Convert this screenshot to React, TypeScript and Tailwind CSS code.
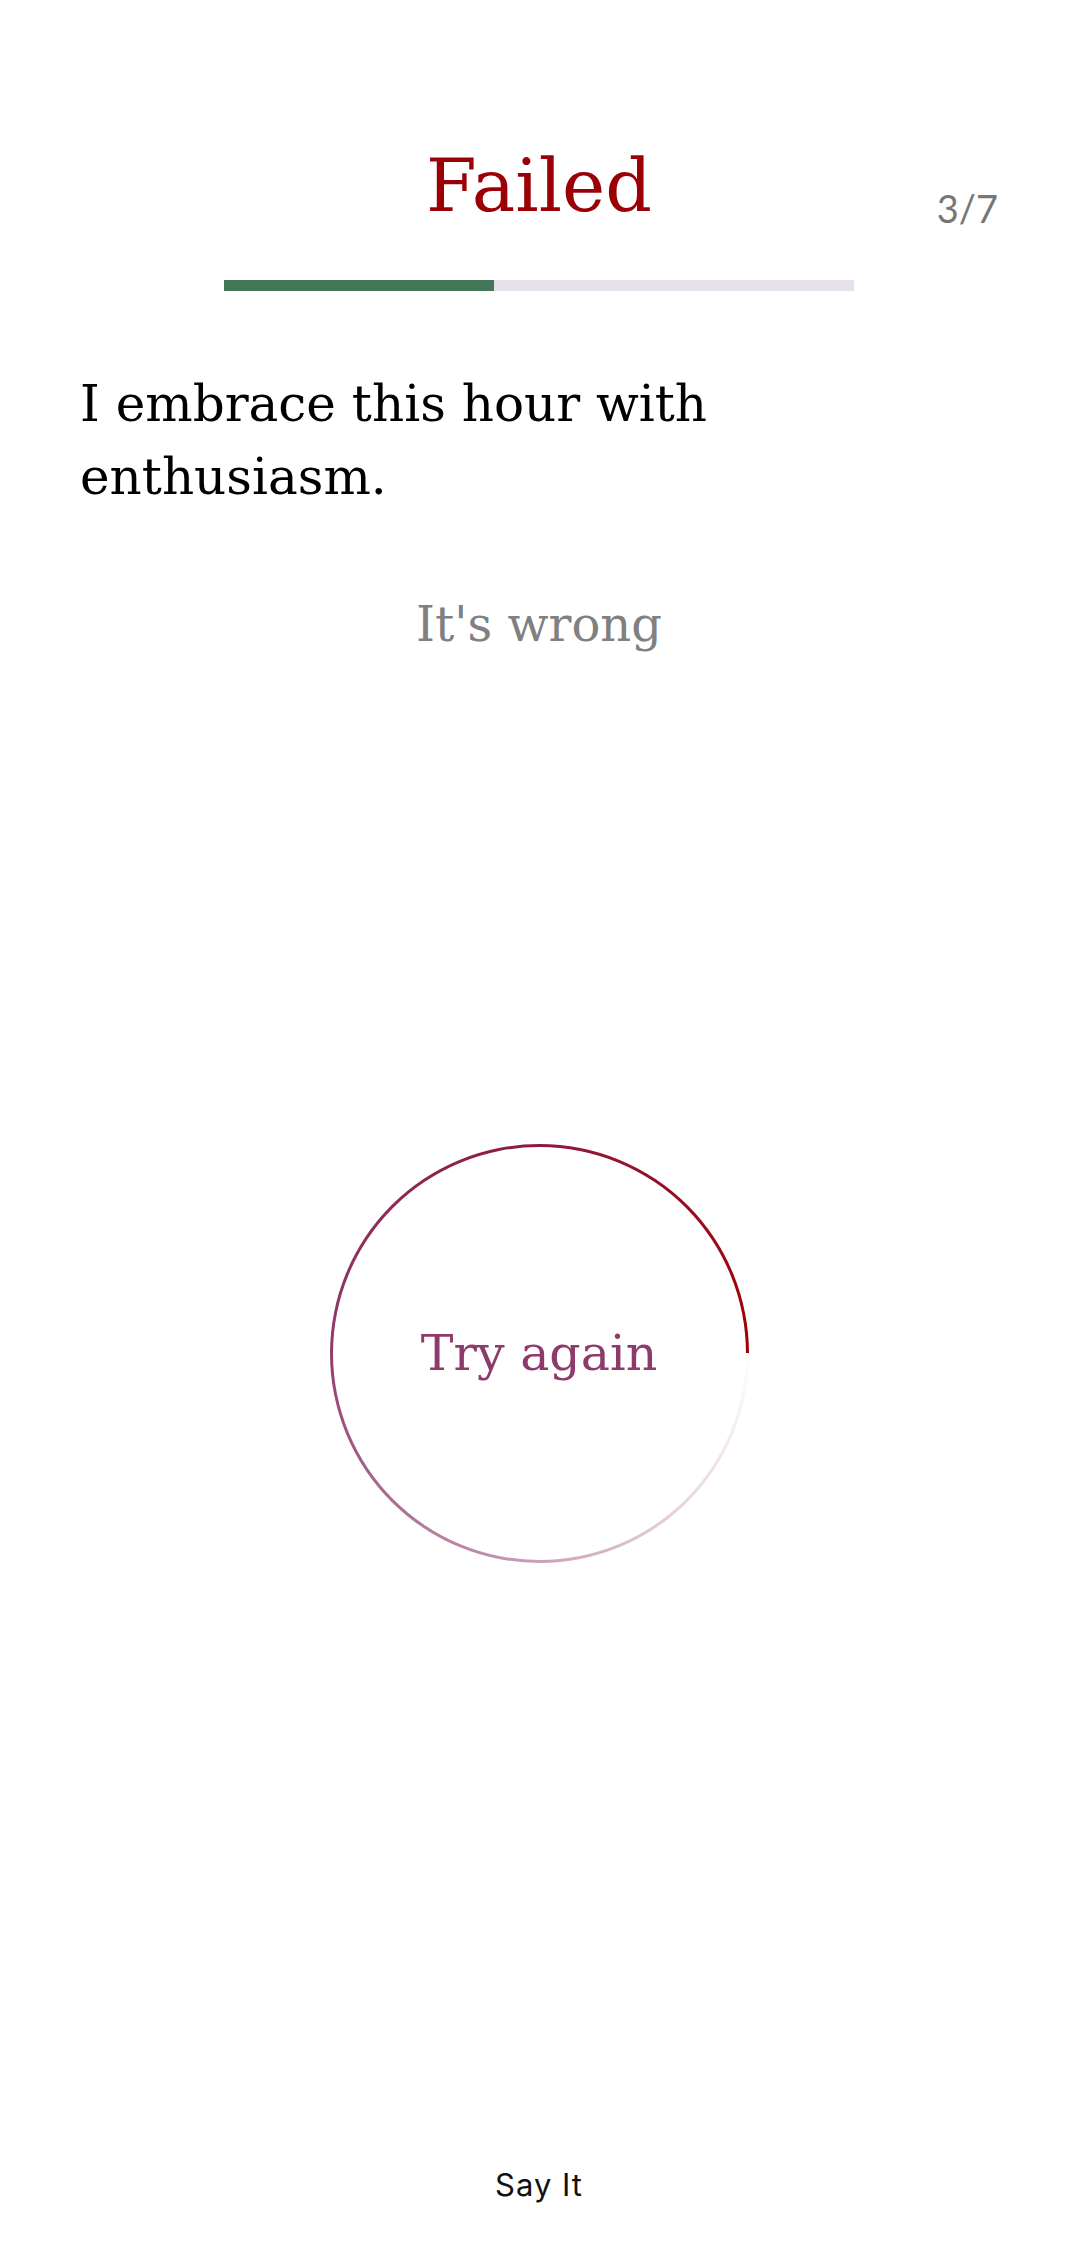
import React from "react";

const total = 7;
const current = 3;

function ProgressRing({ label }: { label: string }) {
  return (
    <div className="mx-auto w-[419px] h-[419px] rounded-full p-[3px] bg-[conic-gradient(from_90deg,#ffffff_0%,#ead8e2_12%,#c9a1b9_25%,#ad6f93_37%,#913d6c_50%,#8d2a55_62%,#8d1a3c_75%,#980c22_88%,#a00000_100%)]">
      <div className="w-full h-full rounded-full bg-white flex items-center justify-center">
        <span className="font-['DejaVu_Serif',serif] text-[49px] leading-none text-[#8e3a6b]">{label}</span>
      </div>
    </div>
  );
}

export default function App() {
  const pct = (current / total) * 100;

  return (
    <div className="w-full min-h-[2252px] bg-white">
      {/* header: title + counter */}
      <div className="grid grid-cols-[1fr_auto_1fr] items-end pt-[149px]">
        <div />
        <h1 className="font-['DejaVu_Serif',serif] text-[73px] leading-none text-[#9c0007]">Failed</h1>
        <div className="justify-self-end pr-[80px] mb-[-5px] font-['Lato',sans-serif] text-[38px] leading-none text-[#777777]">
          {current}/{total}
        </div>
      </div>

      {/* progress bar */}
      <div className="mx-auto mt-[58px] w-[630px] h-[11px] bg-[#e6e0ed]">
        <div className="h-full bg-[#447757]" style={{ width: `${pct}%` }} />
      </div>

      {/* phrase */}
      <p className="mt-[77px] px-[80px] font-['DejaVu_Serif',serif] text-[50px] leading-[73px] text-black">
        I embrace this hour with enthusiasm.
      </p>

      <p className="mt-[86px] text-center font-['DejaVu_Serif',serif] text-[48px] leading-none text-[#808080]">
        It's wrong
      </p>

      <div className="mt-[496px]">
        <ProgressRing label="Try again" />
      </div>

      <div className="mt-[606px] text-center font-['Inter',sans-serif] text-[31px] leading-none tracking-[1px] text-[#111111]">
        Say It
      </div>
    </div>
  );
}
